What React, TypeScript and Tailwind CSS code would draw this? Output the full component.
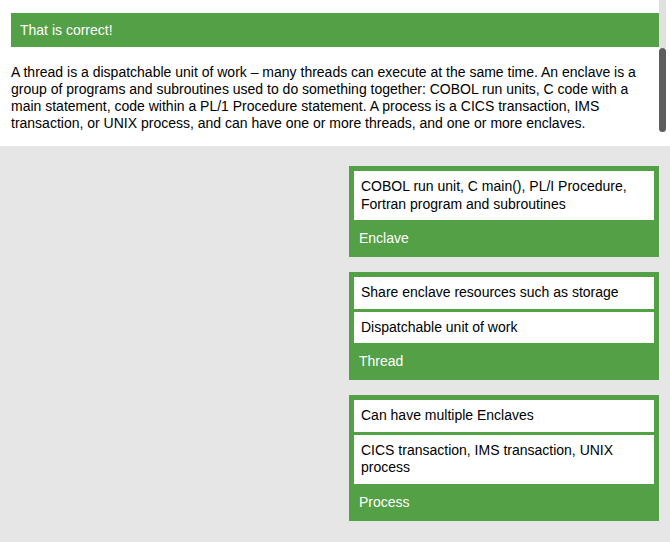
import React from "react";

type Card = { label: string; items: string[] };

const cards: Card[] = [
  { label: "Enclave", items: ["COBOL run unit, C main(), PL/I Procedure, Fortran program and subroutines"] },
  { label: "Thread", items: ["Share enclave resources such as storage", "Dispatchable unit of work"] },
  { label: "Process", items: ["Can have multiple Enclaves", "CICS transaction, IMS transaction, UNIX process"] },
];

const App = () => {
  return (
    <div className="w-[670px] h-[542px] overflow-hidden bg-[#e6e6e6] font-['Liberation_Sans',Arial,sans-serif] text-[14px]">
      <div className="relative h-[146px] bg-white pt-[13px] px-[11px]">
        <div className="h-[34px] flex items-center px-[9px] bg-[#53a047] text-white">That is correct!</div>
        <p className="mt-[17px] leading-[17px] text-black">
          A thread is a dispatchable unit of work – many threads can execute at the same time. An enclave is a group of
          programs and subroutines used to do something together: COBOL run units, C code with a main statement, code
          within a PL/1 Procedure statement. A process is a CICS transaction, IMS transaction, or UNIX process, and can
          have one or more threads, and one or more enclaves.
        </p>
        <div className="absolute left-[659px] top-0 w-[7px] h-[48px] bg-[#e0e0e0]" />
        <div className="absolute left-[659px] top-[48px] w-[7px] h-[84px] rounded-full bg-[#5d5d5d]" />
      </div>

      <div className="flex flex-col items-end gap-[15px] pt-[20px] pr-[11px]">
        {cards.map((card) => (
          <div key={card.label} className="w-[310px] bg-[#53a047] pt-[5px] px-[5px]">
            <div className="flex flex-col gap-[3px]">
              {card.items.map((item) => (
                <div key={item} className="bg-white px-[7px] py-[7px] leading-[17.5px] text-black">
                  {item}
                </div>
              ))}
            </div>
            <div className="h-[37px] flex items-center pl-[5px] text-white">{card.label}</div>
          </div>
        ))}
      </div>
    </div>
  );
};

export default App;
